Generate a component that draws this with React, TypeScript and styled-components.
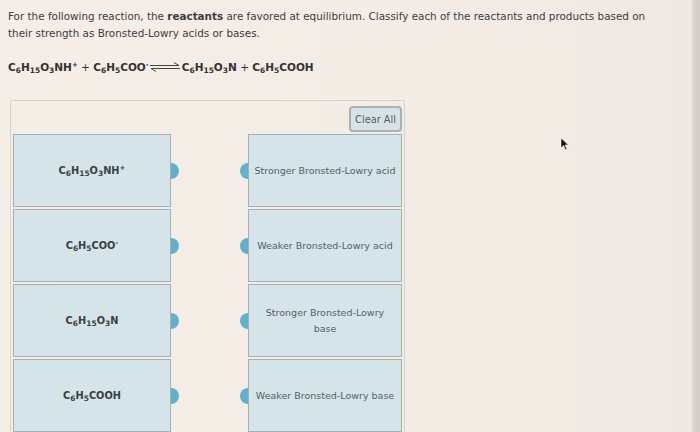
import React from "react";
import styled, { createGlobalStyle } from "styled-components";

const GlobalStyle = createGlobalStyle`
  html, body {
    margin: 0;
    padding: 0;
    background: #f3ede5;
  }
  body {
    font-family: "DejaVu Sans", Verdana, sans-serif;
    color: #3b3b3b;
  }
`;

const Page = styled.div`
  position: relative;
  box-sizing: border-box;
  width: 700px;
  height: 432px;
  overflow: hidden;
  padding: 8px 0 0 8px;
  background: linear-gradient(90deg, #f4eee6 0%, #f2ece5 70%, #efe8e2 98.8%, #d9d3ce 99%, #d3cdc8 100%);
`;

const Prompt = styled.p`
  margin: 0;
  width: 645px;
  font-size: 10.4px;
  line-height: 17px;
  color: #3d3d3d;
`;

const Equation = styled.div`
  display: flex;
  align-items: center;
  margin-top: 19px;
  font-size: 10.5px;
  font-weight: bold;
  color: #333;
  white-space: pre;
`;

const Formula = styled.span`
  sub {
    font-size: 7.5px;
    vertical-align: -2px;
    line-height: 0;
  }
  sup {
    font-size: 7px;
    vertical-align: 4px;
    line-height: 0;
  }
`;

const Plus = styled.span`
  font-weight: normal;
`;

const Arrow = styled.svg`
  width: 32px;
  height: 10px;
  margin: 0 1px 0 0;
  flex: none;
`;

const Panel = styled.div`
  box-sizing: border-box;
  width: 395px;
  margin: 27px 0 0 2px;
  padding: 0 2px 4px 2px;
  border: 1px solid #d3d2cc;
  border-bottom: none;
  border-radius: 2px 2px 0 0;
`;

const PanelHeader = styled.div`
  display: flex;
  justify-content: flex-end;
  height: 33px;
  padding-top: 5px;
  box-sizing: border-box;
`;

const ClearButton = styled.button`
  height: 26px;
  padding: 0 4px;
  font-family: "DejaVu Sans", Verdana, sans-serif;
  font-size: 9.8px;
  color: #555b5e;
  background: #d5e3e6;
  border: 2px solid #a9b1b3;
  border-radius: 4px;
`;

const Board = styled.div`
  display: grid;
  grid-template-columns: 158px 154px;
  justify-content: space-between;
  row-gap: 2px;
`;

const Card = styled.div<{ side: "left" | "right" }>`
  position: relative;
  box-sizing: border-box;
  height: 73px;
  display: flex;
  align-items: center;
  justify-content: center;
  padding: 0 4px;
  text-align: center;
  white-space: pre-line;
  background: #d4e4e9;
  border: 1px solid #a8afb0;
  font-size: ${({ side }) => (side === "left" ? "9.8px" : "9.5px")};
  font-weight: ${({ side }) => (side === "left" ? "bold" : "normal")};
  line-height: 16px;
  color: ${({ side }) => (side === "left" ? "#3a3f42" : "#566065")};

  &::after {
    content: "";
    position: absolute;
    top: 50%;
    width: 8px;
    height: 16px;
    margin-top: -8px;
    background: #5db2cd;
    ${({ side }) =>
      side === "left"
        ? "right: -9px; border-radius: 0 8px 8px 0;"
        : "left: -9px; border-radius: 8px 0 0 8px;"}
  }
`;

const Cursor = styled.svg`
  position: absolute;
  left: 560px;
  top: 137px;
  width: 10px;
  height: 14px;
`;

const species = [
  <Formula>C<sub>6</sub>H<sub>15</sub>O<sub>3</sub>NH<sup>+</sup></Formula>,
  <Formula>C<sub>6</sub>H<sub>5</sub>COO<sup>-</sup></Formula>,
  <Formula>C<sub>6</sub>H<sub>15</sub>O<sub>3</sub>N</Formula>,
  <Formula>C<sub>6</sub>H<sub>5</sub>COOH</Formula>,
];

const labels = [
  "Stronger Bronsted-Lowry acid",
  "Weaker Bronsted-Lowry acid",
  "Stronger Bronsted-Lowry\nbase",
  "Weaker Bronsted-Lowry base",
];

export default function App() {
  return (
    <>
      <GlobalStyle />
      <Page>
        <Prompt>
          For the following reaction, the <b>reactants</b> are favored at equilibrium. Classify
          each of the reactants and products based on their strength as Bronsted-Lowry acids or
          bases.
        </Prompt>
        <Equation>
          <Formula>
            C<sub>6</sub>H<sub>15</sub>O<sub>3</sub>NH<sup>+</sup>
            <Plus> + </Plus>C<sub>6</sub>H<sub>5</sub>COO<sup>-</sup>
          </Formula>
          <Arrow viewBox="0 0 32 10">
            <path d="M1 3.5 H30 L25 0.5" fill="none" stroke="#444" strokeWidth="1" />
            <path d="M31 6.5 H2 L7 9.5" fill="none" stroke="#444" strokeWidth="1" />
          </Arrow>
          <Formula>
            C<sub>6</sub>H<sub>15</sub>O<sub>3</sub>N
            <Plus> + </Plus>C<sub>6</sub>H<sub>5</sub>COOH
          </Formula>
        </Equation>
        <Panel>
          <PanelHeader>
            <ClearButton>Clear All</ClearButton>
          </PanelHeader>
          <Board>
            {species.map((s, i) => (
              <React.Fragment key={i}>
                <Card side="left">{s}</Card>
                <Card side="right">{labels[i]}</Card>
              </React.Fragment>
            ))}
          </Board>
        </Panel>
        <Cursor viewBox="0 0 10 14">
          <path d="M1 1 L1 11 L3.5 8.5 L5.5 13 L7 12.3 L5 8 L8.5 8 Z" fill="#111" stroke="#fff" strokeWidth="0.6" />
        </Cursor>
      </Page>
    </>
  );
}
